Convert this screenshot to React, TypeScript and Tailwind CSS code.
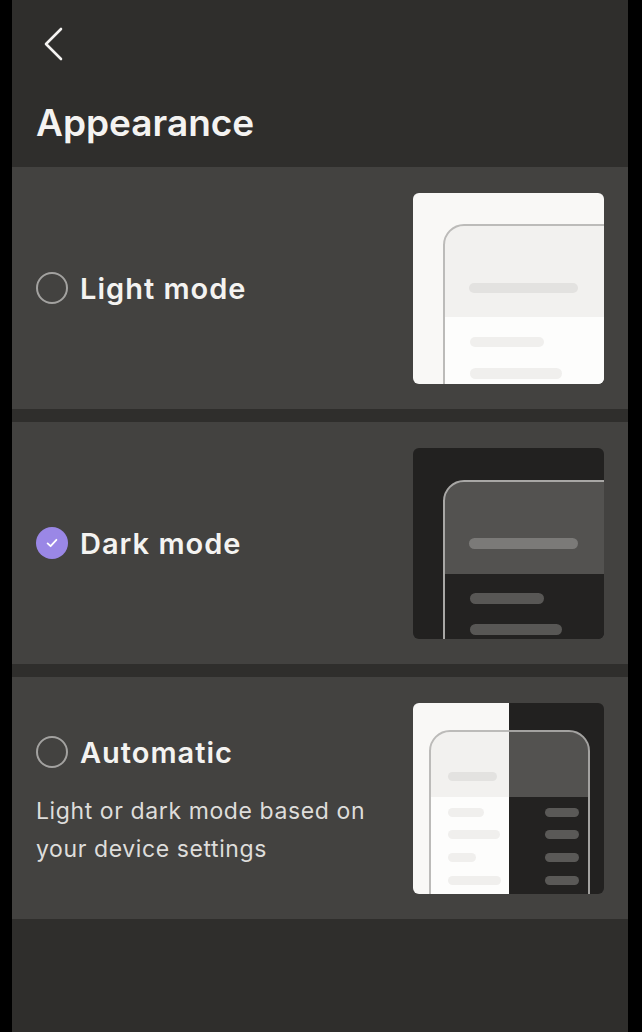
// @ts-nocheck
const font = { fontFamily: "Inter, 'Noto Sans', sans-serif" };

function LightPreview() {
  return (
    <svg width="191" height="191" viewBox="0 0 191 191" className="shrink-0">
      <defs>
        <clipPath id="lp-box">
          <rect x="0" y="0" width="191" height="191" rx="6" />
        </clipPath>
        <clipPath id="lp-phone">
          <rect x="31" y="32" width="220" height="220" rx="20" />
        </clipPath>
      </defs>
      <g clipPath="url(#lp-box)">
        <rect x="0" y="0" width="191" height="191" fill="#f9f8f6" />
        <g clipPath="url(#lp-phone)">
          <rect x="31" y="32" width="220" height="220" fill="#fdfdfc" />
          <rect x="31" y="32" width="220" height="92" fill="#f2f1ef" />
        </g>
        <rect x="31" y="32" width="220" height="220" rx="20" fill="none" stroke="#bcbbb9" strokeWidth="2" />
        <rect x="56" y="90" width="109" height="10" rx="5" fill="#e3e2e0" />
        <rect x="57" y="144" width="74" height="10" rx="5" fill="#f0efed" />
        <rect x="57" y="175" width="92" height="11" rx="5.5" fill="#f0efed" />
      </g>
    </svg>
  );
}

function DarkPreview() {
  return (
    <svg width="191" height="191" viewBox="0 0 191 191" className="shrink-0">
      <defs>
        <clipPath id="dp-box">
          <rect x="0" y="0" width="191" height="191" rx="6" />
        </clipPath>
        <clipPath id="dp-phone">
          <rect x="31" y="33" width="220" height="220" rx="20" />
        </clipPath>
      </defs>
      <g clipPath="url(#dp-box)">
        <rect x="0" y="0" width="191" height="191" fill="#222120" />
        <g clipPath="url(#dp-phone)">
          <rect x="31" y="33" width="220" height="220" fill="#232221" />
          <rect x="31" y="33" width="220" height="93" fill="#535250" />
        </g>
        <rect x="31" y="33" width="220" height="220" rx="20" fill="none" stroke="#a8a7a5" strokeWidth="2" />
        <rect x="56" y="90" width="109" height="11" rx="5.5" fill="#7b7a78" />
        <rect x="57" y="145" width="74" height="11" rx="5.5" fill="#585755" />
        <rect x="57" y="176" width="92" height="11" rx="5.5" fill="#585755" />
      </g>
    </svg>
  );
}

function AutoPreview() {
  const rows = [105, 127, 150, 173];
  const leftW = [36, 52, 28, 53];
  return (
    <svg width="191" height="191" viewBox="0 0 191 191" className="shrink-0">
      <defs>
        <clipPath id="ap-box">
          <rect x="0" y="0" width="191" height="191" rx="6" />
        </clipPath>
        <clipPath id="ap-left">
          <rect x="0" y="0" width="96" height="191" />
        </clipPath>
        <clipPath id="ap-right">
          <rect x="96" y="0" width="95" height="191" />
        </clipPath>
        <clipPath id="ap-phone">
          <rect x="17" y="28" width="159" height="220" rx="20" />
        </clipPath>
      </defs>
      <g clipPath="url(#ap-box)">
        <g clipPath="url(#ap-left)">
          <rect x="0" y="0" width="191" height="191" fill="#f9f8f6" />
          <g clipPath="url(#ap-phone)">
            <rect x="17" y="28" width="159" height="220" fill="#fdfdfc" />
            <rect x="17" y="28" width="159" height="66" fill="#f2f1ef" />
          </g>
          <rect x="17" y="28" width="159" height="220" rx="20" fill="none" stroke="#bcbbb9" strokeWidth="2" />
          <rect x="35" y="69" width="49" height="9" rx="4.5" fill="#e3e2e0" />
          {rows.map((y, i) => (
            <rect key={y} x="35" y={y} width={leftW[i]} height="9" rx="4.5" fill="#f0efed" />
          ))}
        </g>
        <g clipPath="url(#ap-right)">
          <rect x="0" y="0" width="191" height="191" fill="#222120" />
          <g clipPath="url(#ap-phone)">
            <rect x="17" y="28" width="159" height="220" fill="#232221" />
            <rect x="17" y="28" width="159" height="66" fill="#535250" />
          </g>
          <rect x="17" y="28" width="159" height="220" rx="20" fill="none" stroke="#a3a2a0" strokeWidth="2" />
          {rows.map((y) => (
            <rect key={y} x="132" y={y} width="34" height="9" rx="4.5" fill="#5a5957" />
          ))}
        </g>
      </g>
    </svg>
  );
}

function Radio({ checked }) {
  if (checked) {
    return (
      <div className="w-8 h-8 rounded-full bg-[#9a87e6] flex items-center justify-center shrink-0">
        <svg width="16" height="16" viewBox="0 0 16 16">
          <path d="M3.6 8.4 L6.6 11.2 L12.4 4.8" fill="none" stroke="#ffffff" strokeWidth="1.8" strokeLinecap="round" strokeLinejoin="round" />
        </svg>
      </div>
    );
  }
  return <div className="w-8 h-8 rounded-full border-2 border-[#a3a2a0] shrink-0" />;
}

function OptionCard({ label, checked, description, preview }) {
  return (
    <div className="h-[242px] bg-[#434240] flex items-center justify-between pl-6 pr-6">
      <div className={description ? "flex flex-col pt-[8px]" : "flex flex-col"}>
        <div className="flex items-center gap-3">
          <Radio checked={checked} />
          <span className="text-[29px] font-semibold text-[#f4f3f1] leading-none tracking-[1px]">{label}</span>
        </div>
        {description && (
          <p className="mt-[24px] text-[23px] leading-[38px] text-[#dedddb] w-[360px] tracking-[0.6px]">{description}</p>
        )}
      </div>
      {preview}
    </div>
  );
}

export default function App() {
  return (
    <div className="w-[642px] h-[1032px] bg-black flex" style={font}>
      <div className="ml-[12px] w-[616px] h-full bg-[#2f2e2c] flex flex-col">
        <div className="h-[167px] flex flex-col px-6">
          <div className="pt-[27px] pl-[6px]">
            <svg width="22" height="34" viewBox="0 0 22 34">
              <path d="M19 2 L4 17 L19 32" fill="none" stroke="#f4f3f1" strokeWidth="2.6" strokeLinecap="round" strokeLinejoin="round" />
            </svg>
          </div>
          <h1 className="mt-[43px] text-[37px] font-semibold text-[#f4f3f1] leading-none">Appearance</h1>
        </div>
        <div className="flex flex-col gap-[13px]">
          <OptionCard label="Light mode" preview={<LightPreview />} />
          <OptionCard label="Dark mode" checked preview={<DarkPreview />} />
          <OptionCard
            label="Automatic"
            description="Light or dark mode based on your device settings"
            preview={<AutoPreview />}
          />
        </div>
      </div>
    </div>
  );
}
